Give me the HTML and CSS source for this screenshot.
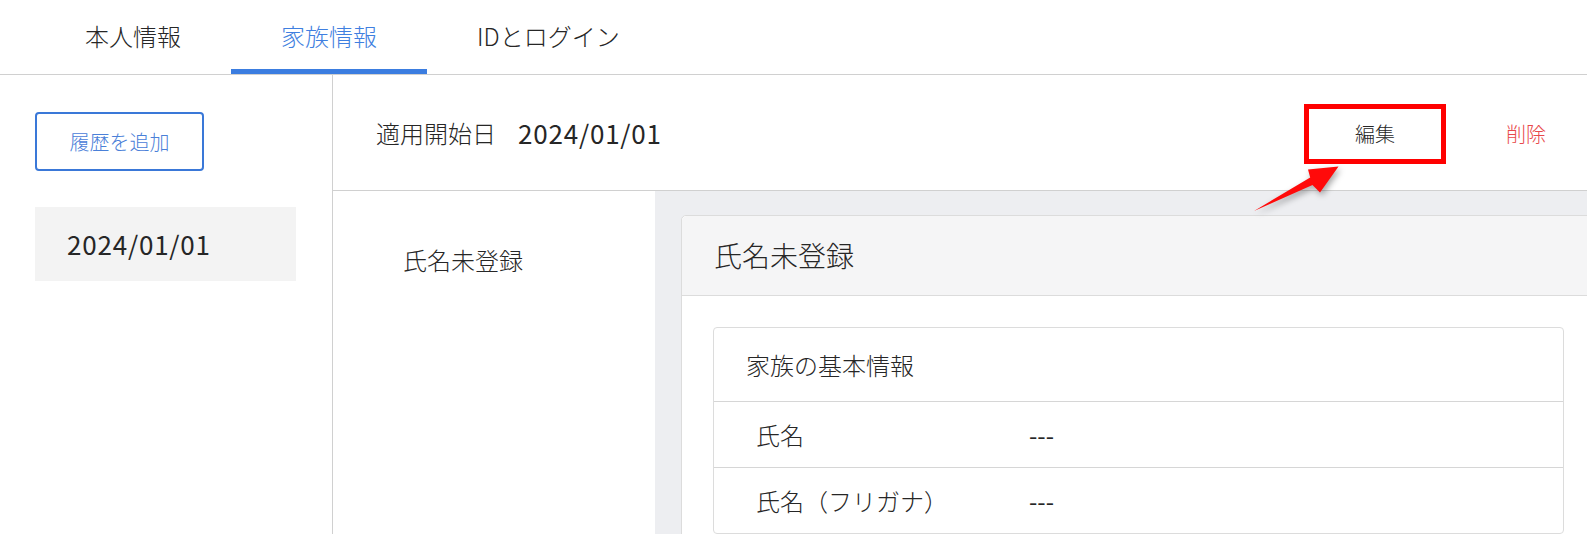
FILE: index.html
```html
<!DOCTYPE html>
<html lang="ja">
<head>
    <meta charset="UTF-8">
    <title>家族情報</title>
    <link rel="stylesheet" href="styles.css">
</head>
<body>

    <!-- Tabs -->
    <nav class="tabs">
        <a class="tab">本人情報</a>
        <a class="tab active">家族情報</a>
        <a class="tab">IDとログイン</a>
    </nav>

    <div class="main">
        <!-- History list -->
        <aside class="side">
            <button class="btn-add">履歴を追加</button>
            <div class="history-item">2024/01/01</div>
        </aside>

        <section class="content">
            <div class="period">
                <span class="period-label">適用開始日</span>
                <span class="period-date">2024/01/01</span>
                <div class="actions">
                    <span class="mark"><button class="btn-edit">編集</button></span>
                    <button class="btn-delete">削除</button>
                </div>
            </div>

            <!-- annotation arrow -->
            <svg class="arrow" width="100" height="60" viewBox="0 0 100 60">
                <polygon points="9,51 67.5,25 75,32.5 93.5,6.5 63,9.5 65.2,17.4" />
            </svg>

            <div class="detail">
                <div class="member-list">
                    <div class="member">氏名未登録</div>
                </div>
                <div class="member-view">
                    <div class="card">
                        <div class="card-title">氏名未登録</div>
                        <div class="card-body">
                            <div class="info">
                                <div class="info-head">家族の基本情報</div>
                                <div class="info-row">
                                    <span class="info-label">氏名</span>
                                    <span class="info-value">---</span>
                                </div>
                                <div class="info-row">
                                    <span class="info-label">氏名（フリガナ）</span>
                                    <span class="info-value">---</span>
                                </div>
                            </div>
                        </div>
                    </div>
                </div>
            </div>
        </section>
    </div>

</body>
</html>
```

FILE: styles.css
```css
html, body {
    margin: 0;
    overflow: hidden;
}

body {
    font-family: "Noto Sans CJK JP", "Noto Sans", sans-serif;
    font-weight: 300;
    color: #262626;
    background-color: #fff;
}

button {
    font-family: inherit;
    font-weight: inherit;
    cursor: pointer;
}

/* tabs */
.tabs {
    display: flex;
    height: 75px;
    padding-left: 35px;
    border-bottom: 1px solid #d0d0d0;
    box-sizing: border-box;
}

.tab {
    height: 74px;
    box-sizing: border-box;
    padding: 2px 50px 0;
    font-size: 24px;
    line-height: 67px;
    border-bottom: 5px solid transparent;
    color: #262626;
}

.tab.active {
    color: #3f7fe0;
    border-bottom-color: #3b7de0;
}

/* layout */
.main {
    display: flex;
    height: 459px;
}

.side {
    width: 333px;
    flex-shrink: 0;
    box-sizing: border-box;
    padding: 37px 0 0 35px;
    border-right: 1px solid #d0d0d0;
}

.btn-add {
    display: block;
    width: 169px;
    height: 59px;
    border: 2px solid #3a78d8;
    border-radius: 4px;
    background-color: #fff;
    color: #4a80d8;
    font-size: 20px;
}

.history-item {
    margin-top: 36px;
    width: 261px;
    height: 74px;
    box-sizing: border-box;
    padding-left: 32px;
    background-color: #f3f3f3;
    font-size: 26px;
    font-weight: 400;
    line-height: 74px;
    letter-spacing: 0.8px;
}

.content {
    position: relative;
    flex: 1;
    min-width: 0;
    display: flex;
    flex-direction: column;
}

.period {
    display: flex;
    align-items: center;
    height: 116px;
    box-sizing: border-box;
    padding: 0 41px 0 43px;
    border-bottom: 1px solid #d0d0d0;
}

.period-label {
    font-size: 24px;
}

.period-date {
    margin-left: 22px;
    font-size: 26px;
    font-weight: 400;
    letter-spacing: 0.8px;
}

.actions {
    margin-left: auto;
    display: flex;
    align-items: center;
    gap: 60px;
    padding-top: 2px;
}

.mark {
    display: block;
    border: 5px solid #ff0000;
}

.btn-edit {
    display: block;
    width: 132px;
    height: 50px;
    border: none;
    background-color: #fff;
    color: #262626;
    font-size: 20px;
}

.btn-delete {
    border: none;
    background: none;
    padding: 0;
    color: #e8494a;
    font-size: 20px;
}

.arrow {
    position: absolute;
    left: 912px;
    top: 85px;
    z-index: 2;
    filter: drop-shadow(2px 3px 3px rgba(0, 0, 0, 0.35));
}

.arrow polygon {
    fill: #ff0a0a;
}

/* detail */
.detail {
    flex: 1;
    display: flex;
    min-height: 0;
}

.member-list {
    width: 322px;
    flex-shrink: 0;
    box-sizing: border-box;
    padding: 51px 0 0 70px;
}

.member {
    font-size: 24px;
    line-height: 36px;
}

.member-view {
    flex: 1;
    overflow: hidden;
    padding: 24px 0 0 26px;
    background-color: #edeef1;
}

.card {
    width: 913px;
    background-color: #fff;
    border: 1px solid #dcdcdc;
    border-radius: 5px;
}

.card-title {
    height: 80px;
    box-sizing: border-box;
    padding-left: 32px;
    background-color: #f5f5f6;
    border-bottom: 1px solid #dcdcdc;
    border-radius: 5px 5px 0 0;
    font-size: 28px;
    line-height: 79px;
}

.card-body {
    padding: 31px;
}

.info {
    border: 1px solid #dcdcdc;
    border-radius: 4px;
}

.info-head {
    height: 73px;
    padding-left: 32px;
    font-size: 24px;
    line-height: 73px;
}

.info-row {
    display: flex;
    align-items: center;
    height: 66px;
    box-sizing: border-box;
    padding-left: 42px;
    border-top: 1px solid #d6d6d6;
    font-size: 24px;
}

.info-label {
    width: 273px;
}

.info-value {
    font-weight: 400;
}
```
